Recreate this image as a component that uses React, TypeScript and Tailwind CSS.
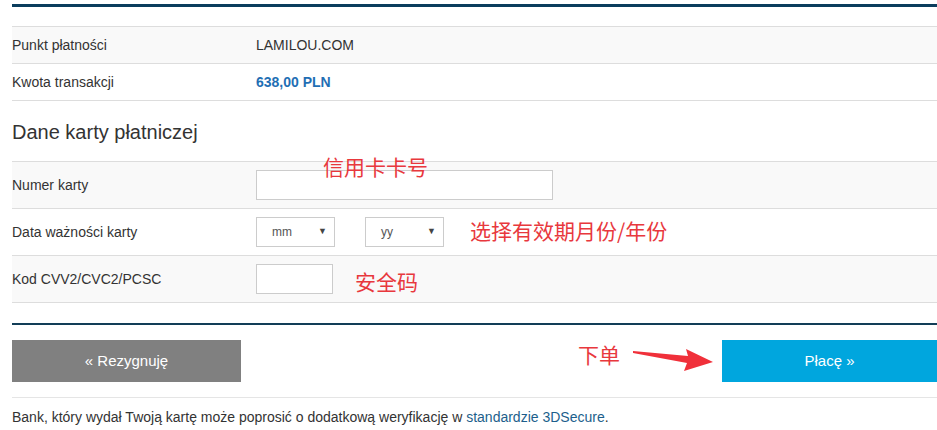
import * as React from "react";

const sans = "font-['Liberation_Sans',Arial,sans-serif]";
const cjk = "font-['Noto_Sans_CJK_SC','Noto_Sans',sans-serif]";

function Row({ label, shade, tall, children }: { label: string; shade?: boolean; tall?: boolean; children: React.ReactNode }) {
  return (
    <div className={`flex items-center border-t border-[#dddddd] ${tall ? "h-[47px]" : "h-[37px]"} ${shade ? "bg-[#f9f9f9]" : "bg-white"}`}>
      <div className="w-[244px] shrink-0 text-[14px] text-[#333333]">{label}</div>
      <div className="flex items-center">{children}</div>
    </div>
  );
}

function Select({ placeholder }: { placeholder: string }) {
  return (
    <div className="flex h-[30px] w-[79px] items-center justify-between border border-[#cccccc] bg-white pl-[15px] pr-[7px] text-[12px] text-[#555555]">
      <span>{placeholder}</span>
      <span className="text-[9px] text-[#444444]">▼</span>
    </div>
  );
}

export default function App() {
  return (
    <div className={`relative min-h-[430px] bg-white pl-[12px] pt-[4px] ${sans}`}>
      <div className="h-[3px] bg-[#0b3d5d]" />

      <div className="mt-[19px]">
        <Row label="Punkt płatności" shade>
          <span className="text-[14px] text-[#333333]">LAMILOU.COM</span>
        </Row>
        <Row label="Kwota transakcji">
          <span className="text-[14px] font-bold text-[#1f6fb4]">638,00 PLN</span>
        </Row>
      </div>

      <div className="flex h-[61px] items-center border-t border-[#dddddd] pt-[2px] text-[20px] text-[#333333]">
        Dane karty płatniczej
      </div>

      <div className="border-b border-[#dddddd]">
        <Row label="Numer karty" shade tall>
          <div className="h-[30px] w-[297px] border border-[#cccccc] bg-white" />
        </Row>
        <Row label="Data ważności karty" tall>
          <div className="flex gap-[30px]">
            <Select placeholder="mm" />
            <Select placeholder="yy" />
          </div>
        </Row>
        <Row label="Kod CVV2/CVC2/PCSC" shade tall>
          <div className="h-[30px] w-[77px] border border-[#cccccc] bg-white" />
        </Row>
      </div>

      <div className="mt-[20px] h-[2px] bg-[#123e57]" />

      <div className="mt-[15px] flex justify-between">
        <button className="h-[42px] w-[229px] bg-[#808080] text-[15px] text-white">« Rezygnuję</button>
        <button className="h-[42px] w-[215px] bg-[#00a6de] text-[15px] text-white">Płacę »</button>
      </div>

      <div className="mt-[15px] border-t border-[#e5e5e5] pt-[9px] text-[14px] text-[#333333]">
        Bank, który wydał Twoją kartę może poprosić o dodatkową weryfikację w{" "}
        <a className="text-[#1d5f8c]">standardzie 3DSecure</a>.
      </div>

      <span className={`absolute left-[323px] top-[156px] text-[21px] leading-none text-[#e8383d] ${cjk}`}>信用卡卡号</span>
      <span className={`absolute left-[470px] top-[220px] text-[21px] leading-none text-[#e8383d] ${cjk}`}>选择有效期月份/年份</span>
      <span className={`absolute left-[355px] top-[271px] text-[21px] leading-none text-[#e8383d] ${cjk}`}>安全码</span>
      <span className={`absolute left-[578px] top-[344px] text-[21px] leading-none text-[#e8383d] ${cjk}`}>下单</span>
      <svg className="absolute left-[630px] top-[344px]" width="86" height="30" viewBox="0 0 86 30">
        <polygon points="3,7 58,12 56,5 83,18 54,27 57,19 3,9" fill="#f0303a" />
      </svg>
    </div>
  );
}
